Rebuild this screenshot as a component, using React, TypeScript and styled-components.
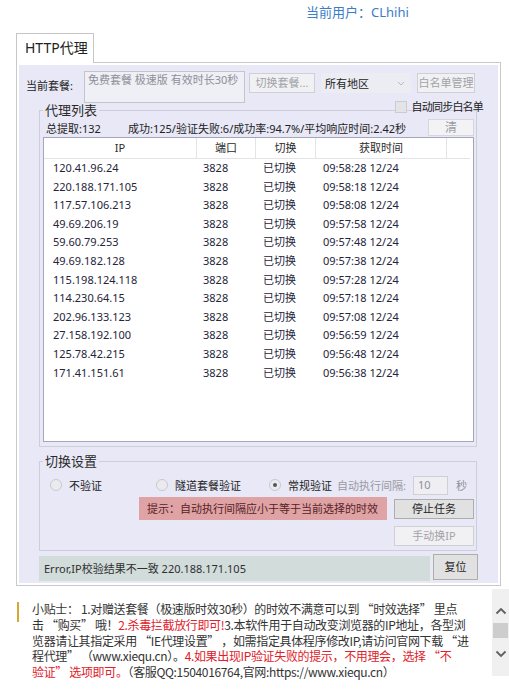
import React from "react";
import styled, { createGlobalStyle } from "styled-components";

const rows = [
  { ip: "120.41.96.24", time: "09:58:28 12/24" },
  { ip: "220.188.171.105", time: "09:58:18 12/24" },
  { ip: "117.57.106.213", time: "09:58:08 12/24" },
  { ip: "49.69.206.19", time: "09:57:58 12/24" },
  { ip: "59.60.79.253", time: "09:57:48 12/24" },
  { ip: "49.69.182.128", time: "09:57:38 12/24" },
  { ip: "115.198.124.118", time: "09:57:28 12/24" },
  { ip: "114.230.64.15", time: "09:57:18 12/24" },
  { ip: "202.96.133.123", time: "09:57:08 12/24" },
  { ip: "27.158.192.100", time: "09:56:59 12/24" },
  { ip: "125.78.42.215", time: "09:56:48 12/24" },
  { ip: "171.41.151.61", time: "09:56:38 12/24" },
];

const App: React.FC = () => {
  return (
    <Page>
      <GlobalStyle />
      <UserBar>当前用户：CLhihi</UserBar>
      <TabStrip>
        <Tab>HTTP代理</Tab>
      </TabStrip>
      <Panel>
        <Inner>
          <TopRow>
            <FieldLabel>当前套餐:</FieldLabel>
            <PlanBox>免费套餐 极速版 有效时长30秒</PlanBox>
            <RightCol>
              <ButtonRow>
                <Btn w={66} h={20} disabled>切换套餐...</Btn>
                <Select>
                  所有地区
                  <svg width="8" height="5" viewBox="0 0 8 5">
                    <path d="M1 1l3 3 3-3" fill="none" stroke="#b8b8c0" strokeWidth="1" />
                  </svg>
                </Select>
                <Btn w={58} h={20} disabled>白名单管理</Btn>
              </ButtonRow>
              <CheckRow>
                <CheckBox />
                <span>自动同步白名单</span>
              </CheckRow>
            </RightCol>
          </TopRow>

          <Group top={-11}>
            <Legend>代理列表</Legend>
            <StatsRow>
              <Total>总提取:132</Total>
              <span>成功:125/验证失败:6/成功率:94.7%/平均响应时间:2.42秒</span>
              <ClearBtn>清</ClearBtn>
            </StatsRow>
            <ListBox>
              <HeaderRow>
                <HeadCell>IP</HeadCell>
                <HeadCell>端口</HeadCell>
                <HeadCell>切换</HeadCell>
                <HeadCell>获取时间</HeadCell>
                <HeadCell />
              </HeaderRow>
              {rows.map((r) => (
                <DataRow key={r.ip}>
                  <Cell pad={9}>{r.ip}</Cell>
                  <Cell pad={6}>3828</Cell>
                  <Cell pad={7}>已切换</Cell>
                  <Cell pad={7}>{r.time}</Cell>
                </DataRow>
              ))}
            </ListBox>
          </Group>

          <Group top={6}>
            <Legend>切换设置</Legend>
            <RadioRow>
              <RadioOption w={106}>
                <Radio />
                <span>不验证</span>
              </RadioOption>
              <RadioOption w={113}>
                <Radio />
                <span>隧道套餐验证</span>
              </RadioOption>
              <RadioOption>
                <Radio checked />
                <span>常规验证</span>
              </RadioOption>
              <MutedLabel>自动执行间隔:</MutedLabel>
              <IntervalInput>10</IntervalInput>
              <Unit>秒</Unit>
            </RadioRow>
            <HintRow>
              <Hint>提示：自动执行间隔应小于等于当前选择的时效</Hint>
              <Btn w={80} h={20}>停止任务</Btn>
            </HintRow>
            <ManualRow>
              <Btn w={80} h={20} disabled>手动换IP</Btn>
            </ManualRow>
          </Group>

          <StatusRow>
            <StatusBar>Error,IP校验结果不一致 220.188.171.105</StatusBar>
            <Btn w={45} h={26}>复位</Btn>
          </StatusRow>
        </Inner>
      </Panel>

      <Tips>
        <TipBody>
          <Marker />
          <TipText>
            <TipLine>小贴士： 1.对赠送套餐（极速版时效30秒）的时效不满意可以到 “时效选择” 里点</TipLine>
            <TipLine>
              击 “购买” 哦！<Red>2.杀毒拦截放行即可!</Red>3.本软件用于自动改变浏览器的IP地址，各型浏
            </TipLine>
            <TipLine>览器请让其指定采用 “IE代理设置” ，如需指定具体程序修改IP,请访问官网下载 “进</TipLine>
            <TipLine>
              程代理” （www.xiequ.cn）。<Red>4.如果出现IP验证失败的提示，不用理会，选择 “不</Red>
            </TipLine>
            <TipLine>
              <Red>验证” 选项即可。</Red>（客服QQ:1504016764,官网:https://www.xiequ.cn）
            </TipLine>
          </TipText>
        </TipBody>
        <ScrollBar>
          <svg width="12" height="8" viewBox="0 0 12 8">
            <path d="M1.5 6.5L6 2l4.5 4.5" fill="none" stroke="#606060" strokeWidth="1.8" />
          </svg>
          <Thumb />
          <svg width="12" height="8" viewBox="0 0 12 8">
            <path d="M1.5 1.5L6 6l4.5-4.5" fill="none" stroke="#606060" strokeWidth="1.8" />
          </svg>
        </ScrollBar>
      </Tips>
    </Page>
  );
};

// page styles

const GlobalStyle = createGlobalStyle`
  body {
    margin: 0;
    background: #ffffff;
    font-family: "Noto Sans", "Noto Sans CJK SC", sans-serif;
    font-size: 11px;
    color: #25253a;
  }
`;

const Page = styled.div`
  width: 509px;
  height: 691px;
  overflow: hidden;
`;

const UserBar = styled.div`
  height: 33px;
  box-sizing: border-box;
  padding: 4px 0 0 306px;
  font-size: 13px;
  line-height: 17px;
  color: #3a7dc6;
`;

const TabStrip = styled.div`
  display: flex;
  padding-left: 16px;
`;

const Tab = styled.div`
  position: relative;
  z-index: 1;
  height: 30px;
  box-sizing: border-box;
  margin-bottom: -1px;
  padding: 0 5px 0 8px;
  border: 1px solid #c6c6c6;
  border-bottom: none;
  background: #fff;
  font-size: 14px;
  line-height: 28px;
  color: #222;
`;

const Panel = styled.div`
  width: 485px;
  box-sizing: border-box;
  margin-left: 16px;
  border: 1px solid #c9c9c9;
  padding: 2px;
  background: #fff;
`;

const Inner = styled.div`
  background: #e8e8f6;
  padding: 6px 0 2px 0;
`;

const TopRow = styled.div`
  display: flex;
  align-items: flex-start;
  padding-left: 7px;
`;

const FieldLabel = styled.div`
  width: 58px;
  margin-top: 7px;
  line-height: 16px;
  color: #222;
`;

const PlanBox = styled.div`
  width: 161px;
  height: 32px;
  box-sizing: border-box;
  border: 1px solid #c4c4ce;
  background: #efeff6;
  padding: 1px 3px;
  line-height: 14px;
  color: #8e8e96;
`;

const RightCol = styled.div`
  display: flex;
  flex-direction: column;
  width: 234px;
  margin: 2px 0 0 4px;
`;

const ButtonRow = styled.div`
  display: flex;
  align-items: center;
  gap: 6px;
`;

const Btn = styled.button<{ w: number; h: number }>`
  width: ${(p) => p.w}px;
  height: ${(p) => p.h}px;
  padding: 0;
  box-sizing: border-box;
  font: inherit;
  line-height: ${(p) => p.h - 2}px;
  color: #1e1e1e;
  background: #e1e1e1;
  border: 1px solid #adadad;
  &:disabled {
    color: #a2a2a8;
    background: #f1f1f4;
    border-color: #cfcfd6;
  }
`;

const Select = styled.div`
  display: flex;
  align-items: center;
  justify-content: space-between;
  width: 90px;
  height: 20px;
  box-sizing: border-box;
  padding: 0 6px 0 4px;
  background: #ececf3;
  color: #1e1e1e;
`;

const CheckRow = styled.div`
  display: flex;
  align-items: center;
  justify-content: flex-end;
  gap: 5px;
  margin-top: 7px;
  line-height: 13px;
  color: #222;
  letter-spacing: -0.8px;
`;

const CheckBox = styled.span`
  width: 12px;
  height: 12px;
  box-sizing: border-box;
  border: 1px solid #cbcbd2;
  background: #e3e3e8;
`;

const Group = styled.fieldset<{ top: number }>`
  min-width: 0;
  margin: ${(p) => p.top}px 21px 0 20px;
  padding: 0 2px 4px 3px;
  border: 1px solid #cdcedb;
`;

const Legend = styled.legend`
  padding: 0 2px;
  font-size: 13px;
  line-height: 16px;
  color: #2a2a2a;
`;

const StatsRow = styled.div`
  display: flex;
  align-items: center;
  height: 19px;
  color: #222;
`;

const Total = styled.span`
  width: 85px;
  padding-left: 3px;
  box-sizing: border-box;
`;

const ClearBtn = styled.span`
  width: 46px;
  height: 17px;
  box-sizing: border-box;
  margin-left: auto;
  border: 1px solid #d6d6dc;
  background: #f3f3f5;
  color: #9c9ca4;
  text-align: center;
  font-size: 12px;
  line-height: 15px;
`;

const ListBox = styled.div`
  height: 305px;
  box-sizing: border-box;
  border: 1px solid #a3a5ba;
  background: #fff;
`;

const columns = "153px 59px 60px 131px 24px";

const HeaderRow = styled.div`
  display: grid;
  grid-template-columns: ${columns};
  height: 21px;
  box-sizing: border-box;
  border-bottom: 1px solid #e4e4e8;
  margin-right: 3px;
`;

const HeadCell = styled.div`
  border-right: 1px solid #e4e4e8;
  text-align: center;
  line-height: 20px;
  color: #2a2a2a;
  &:last-child {
    border-right: none;
  }
`;

const DataRow = styled.div`
  display: grid;
  grid-template-columns: ${columns};
  height: 18.6px;
  line-height: 18.6px;
`;

const Cell = styled.div<{ pad: number }>`
  padding-left: ${(p) => p.pad}px;
  white-space: nowrap;
`;

const RadioRow = styled.div`
  display: flex;
  align-items: center;
  height: 20px;
  margin-top: 6px;
  padding-left: 7px;
  color: #222;
`;

const RadioOption = styled.label<{ w?: number }>`
  display: flex;
  align-items: center;
  gap: 7px;
  width: ${(p) => (p.w ? `${p.w}px` : "auto")};
`;

const Radio = styled.span<{ checked?: boolean }>`
  position: relative;
  width: 12px;
  height: 12px;
  box-sizing: border-box;
  border-radius: 50%;
  border: 1px solid #c8c8cf;
  background: #ebebef;
  &::after {
    content: "";
    display: ${(p) => (p.checked ? "block" : "none")};
    position: absolute;
    left: 3px;
    top: 3px;
    width: 4px;
    height: 4px;
    border-radius: 50%;
    background: #555;
  }
`;

const MutedLabel = styled.span`
  margin-left: 5px;
  color: #9a9aa2;
`;

const IntervalInput = styled.div`
  width: 35px;
  height: 19px;
  box-sizing: border-box;
  margin-left: 7px;
  padding-left: 4px;
  border: 1px solid #cfcfd6;
  background: #eeeef3;
  color: #8e8e96;
  line-height: 15px;
`;

const Unit = styled.span`
  margin-left: 8px;
  color: #8e8e96;
`;

const HintRow = styled.div`
  display: flex;
  align-items: center;
  gap: 7px;
  margin-top: 2px;
  padding-left: 96px;
`;

const Hint = styled.div`
  width: 248px;
  height: 23px;
  box-sizing: border-box;
  padding-left: 8px;
  background: #dfa2a5;
  color: #552424;
  line-height: 23px;
`;

const ManualRow = styled.div`
  display: flex;
  justify-content: flex-end;
  margin-top: 6px;
`;

const StatusRow = styled.div`
  display: flex;
  align-items: flex-start;
  gap: 3px;
  margin: 3px 0 0 20px;
`;

const StatusBar = styled.div`
  width: 391px;
  height: 25px;
  box-sizing: border-box;
  margin-top: 2px;
  padding-left: 5px;
  background: #d1dcdb;
  color: #303030;
  line-height: 25px;
`;

const Tips = styled.div`
  display: flex;
  margin: 3px 0 0 17px;
  height: 87px;
`;

const TipBody = styled.div`
  flex: 1;
  display: flex;
  align-items: flex-start;
`;

const Marker = styled.span`
  width: 2px;
  height: 20px;
  margin-top: 13px;
  background: #d6a935;
`;

const TipText = styled.div`
  margin: 12px 0 0 13px;
  font-family: "Noto Sans CJK SC", sans-serif;
  font-size: 12px;
  color: #333;
`;

const TipLine = styled.div`
  height: 15.8px;
  line-height: 15.8px;
  white-space: nowrap;
  letter-spacing: -0.35px;
`;

const Red = styled.span`
  color: #e0202a;
`;

const ScrollBar = styled.div`
  display: flex;
  flex-direction: column;
  align-items: center;
  width: 17px;
  background: #f0f0f0;
  padding-top: 18px;
  box-sizing: border-box;
  svg:first-child {
    margin-bottom: 8px;
  }
  svg:last-child {
    margin-top: 12px;
  }
`;

const Thumb = styled.span`
  width: 15px;
  height: 15px;
  background: #cdcdcd;
`;

export default App;
